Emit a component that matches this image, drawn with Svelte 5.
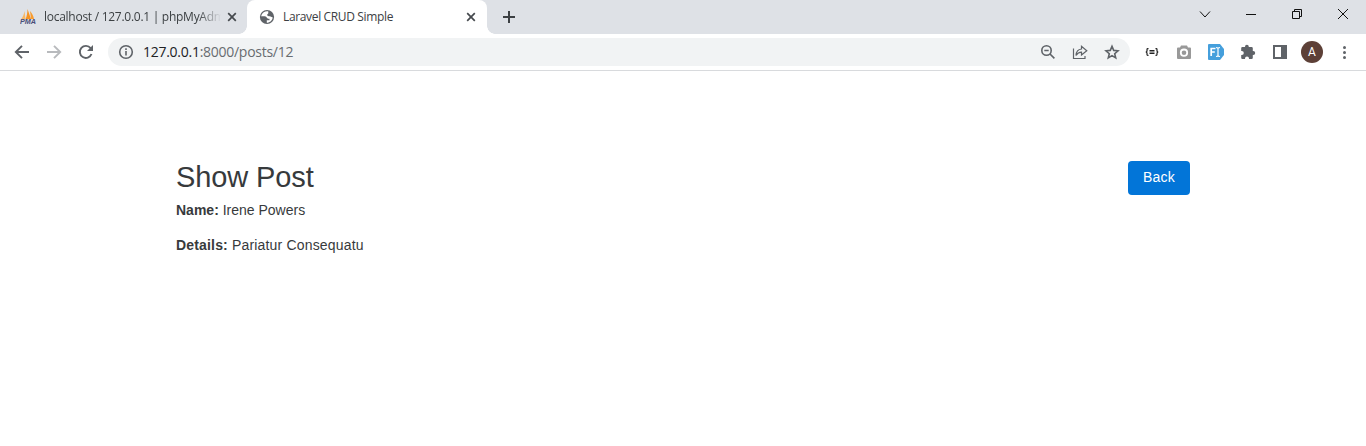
<script>
  const post = { name: 'Irene Powers', details: 'Pariatur Consequatu' };
</script>

<div class="window">
  <header class="tabs">
    <div class="tab">
      <svg class="fav" width="16" height="16" viewBox="0 0 16 16">
        <path d="M1 10.500C3 8 4 5 4.500 2L5.500 10Z" fill="#f8b765" />
        <path d="M5.500 10.500C7 7 7.500 3 7.500 0L11 10Z" fill="#f79321" />
        <path d="M10 2C12 4 13.500 7 14 10H11Z" fill="#f89c30" />
        <text x="0" y="15" textLength="16" lengthAdjust="spacingAndGlyphs">PMA</text>
      </svg>
      <span class="title faded">localhost / 127.0.0.1 | phpMyAdmin</span>
      <svg class="close" width="10" height="10" viewBox="0 0 10 10"><path d="M1.200 1.200l7.600 7.600M8.800 1.200l-7.600 7.600" /></svg>
    </div>
    <div class="tab active">
      <svg class="fav" width="16" height="16" viewBox="0 0 16 16">
        <circle cx="8" cy="8" r="7.100" fill="#5f6368" />
        <path d="M9.300 2.400C6.500 1.900 3.500 3.300 2.500 6L2.200 7.600H6.200C7.700 7.600 7.800 9.500 9.200 9.700H10.500V11.300H7.800V13.700C11 13.700 13.500 11.300 13.700 8.200C12.500 8.500 11.900 7.400 10.800 7.300C9.600 7.200 8.400 7.300 8.200 6.100C8 5 9.200 5.100 9.300 4Z" fill="#fff" />
        <path d="M2.200 7.500H5.500C7 7.700 7 9 6.300 10V13.400C4 12.700 2 10.500 2.200 7.500Z" fill="#5f6368" />
      </svg>
      <span class="title">Laravel CRUD Simple</span>
      <svg class="close" width="10" height="10" viewBox="0 0 10 10"><path d="M1.200 1.200l7.600 7.600M8.800 1.200l-7.600 7.600" /></svg>
    </div>
    <svg class="plus" width="12" height="12" viewBox="0 0 12 12"><path d="M6 0v12M0 6h12" /></svg>
    <div class="controls">
      <svg width="46" height="28" viewBox="0 0 46 28"><path d="M18 11.500l5 5.500 5-5.500" /></svg>
      <svg width="46" height="28" viewBox="0 0 46 28"><path d="M18 14.500h10" /></svg>
      <svg width="46" height="28" viewBox="0 0 46 28"><path d="M18.500 11.500h7v7h-7zM20.500 11.500v-2h7v7h-2" /></svg>
      <svg width="46" height="28" viewBox="0 0 46 28"><path d="M18 9l10 10M28 9L18 19" /></svg>
    </div>
  </header>

  <nav class="toolbar">
    <div class="nav">
      <svg width="16" height="16" viewBox="0 0 16 16"><path d="M15 8H2M8 1.800L1.800 8 8 14.200" /></svg>
      <svg class="off" width="16" height="16" viewBox="0 0 16 16"><path d="M1 8h13M8 1.800L14.200 8 8 14.200" /></svg>
      <svg width="16" height="16" viewBox="0 0 16 16"><path d="M13.500 10A6 6 0 1 1 12.600 4.200L14 6" /><path class="solid" d="M15 1v6H9z" /></svg>
    </div>
    <div class="omnibox">
      <svg width="16" height="16" viewBox="0 0 16 16"><circle cx="8" cy="8" r="6.300" /><path d="M8 7v4.500M8 4.200v1.700" /></svg>
      <span class="url"><b>127.0.0.1</b>:8000/posts/12</span>
      <div class="actions">
        <svg width="16" height="16" viewBox="0 0 16 16"><circle cx="6.500" cy="6.500" r="4.700" /><path d="M10 10l4.400 4.400M4.300 6.500h4.400" /></svg>
        <svg class="thin" width="16" height="16" viewBox="0 0 16 16"><path d="M1.500 4.500v10h11.500V12M4 11.500C4.200 7.500 6.200 5.300 9.500 5V2.200L14.800 6.700 9.500 11V8.200C7.200 8.200 5.400 9.200 4 11.500Z" /></svg>
        <svg class="star" width="16" height="16" viewBox="0 0 16 16"><path d="M8 2.400l1.700 4 4.300.4-3.300 2.900 1 4.200-3.700-2.300-3.700 2.300 1-4.200L2 6.800l4.300-.4Z" /></svg>
      </div>
    </div>
    <div class="extensions">
      <svg width="16" height="16" viewBox="0 0 16 16"><path class="braces" d="M4.500 4.700H3.800Q3 4.700 3 5.500V7Q3 8 1.700 8Q3 8 3 9V10.500Q3 11.300 3.800 11.300H4.500M11.500 4.700h.7q.8 0 .8.800V7q0 1 1.300 1Q13 8 13 9v1.500q0 .8-.8.800h-.7M5.500 6.500h5M5.500 8h5M5.500 9.500h5" /></svg>
      <svg width="16" height="16" viewBox="0 0 16 16"><path d="M5 1.500h6l1 2h2q1 0 1 1V14q0 1-1 1H2q-1 0-1-1V4.500q0-1 1-1h2Z" fill="#999" /><circle cx="8" cy="8.700" r="3.200" fill="#999" stroke="#fff" stroke-width="1.800" /></svg>
      <svg width="16" height="16" viewBox="0 0 16 16"><path d="M1 0h11l4 5v6l-4 5H1q-1 0-1-1V1q0-1 1-1Z" fill="#459fdc" /><path d="M3.200 12V4.500h4.300M3.200 8h3.600" stroke="#fff" stroke-width="1.700" /><path d="M8 3.500q2 0 2 1q0-1 2-1M10 4.500v7M8 12.500q2 0 2-1q0 1 2 1" stroke="#fff" stroke-width="1.200" /></svg>
      <svg width="16" height="16" viewBox="0 0 16 16"><path class="solid" d="M1.200 4.200Q1.200 3 2.400 3H5V2.700a1.900 1.900 0 0 1 3.800 0V3h2.800q1.200 0 1.200 1.200V7h.4a2 2 0 0 1 0 4h-.4v2.800q0 1.200-1.200 1.200H9v-.5a2 2 0 0 0-4 0v.5H2.400q-1.200 0-1.200-1.200V11h.6a2 2 0 0 0 0-4h-.6Z" /></svg>
      <svg width="16" height="16" viewBox="0 0 16 16"><path class="solid" fill-rule="evenodd" d="M1 1h14v14H1zM3 3v10h6V3z" /></svg>
      <span class="avatar">A</span>
      <svg width="16" height="16" viewBox="0 0 16 16"><circle class="solid" cx="8.500" cy="3.500" r="1.500" /><circle class="solid" cx="8.500" cy="8.500" r="1.500" /><circle class="solid" cx="8.500" cy="13.500" r="1.500" /></svg>
    </div>
  </nav>

  <main>
    <div class="heading">
      <h2>Show Post</h2>
      <button>Back</button>
    </div>
    <p><strong>Name:</strong> <span>{post.name}</span></p>
    <p class="details"><strong>Details:</strong> <span>{post.details}</span></p>
  </main>
</div>

<style>
  :global(body) { margin: 0; background: #fff; }
  .window { height: 446px; overflow: hidden; font-family: "Open Sans", "Noto Sans", sans-serif; }
  svg { display: block; flex: none; fill: none; }
  .tabs { height: 34px; display: flex; background: #dee1e6; }
  .tab { width: 240px; height: 34px; box-sizing: border-box; display: flex; align-items: center; padding: 0 11px 0 12px; position: relative; }
  .tab:first-child { margin-left: 7px; padding: 0 10px 0 13px; }
  .active { background: #fff; border-radius: 8px 8px 0 0; }
  .active::before, .active::after { content: ""; position: absolute; bottom: 0; width: 8px; height: 8px; }
  .active::before { left: -8px; background: radial-gradient(circle at 0 0, #dee1e6 7.500px, #fff 8px); }
  .active::after { right: -8px; background: radial-gradient(circle at 100% 0, #dee1e6 7.500px, #fff 8px); }
  .fav text { font: italic 700 7px "Liberation Sans", sans-serif; fill: #494d78; }
  .title { flex: 1; margin-left: 8px; margin-right: 6px; overflow: hidden; white-space: nowrap; font-size: 12px; line-height: 18px; letter-spacing: -.35px; color: #3c4043; }
  .faded { letter-spacing: -.27px; -webkit-mask-image: linear-gradient(90deg, #000 87%, transparent 100%); mask-image: linear-gradient(90deg, #000 87%, transparent 100%); }
  .close { stroke: #45494d; stroke-width: 1.700; }
  .plus { margin: 11px 0 0 16px; stroke: #3c4043; stroke-width: 2; }
  .controls { display: flex; margin-left: auto; stroke: #111; stroke-width: 1; }
  .toolbar { height: 37px; box-sizing: border-box; border-bottom: 1px solid #d8dadd; display: flex; align-items: center; padding: 0 14px; }
  .nav { display: flex; gap: 16px; stroke: #5f6368; stroke-width: 1.900; }
  .nav .off { stroke: #b8babd; }
  .solid { fill: #5f6368; stroke: none; }
  .omnibox { margin-left: 14px; width: 1022px; height: 28px; box-sizing: border-box; display: flex; align-items: center; padding: 0 10px; border-radius: 14px; background: #f1f3f4; stroke: #5f6368; stroke-width: 1.600; }
  .url { margin-left: 9px; font-size: 14px; line-height: 20px; color: #686c70; letter-spacing: -.27px; }
  .url b { font-weight: 400; color: #202124; }
  .actions { margin-left: auto; display: flex; gap: 16px; }
  .thin { stroke-width: 1.200; }
  .extensions { margin-left: 14px; display: flex; gap: 16px; align-items: center; }
  .braces { stroke: #222; stroke-width: 1.200; }
  .avatar { width: 22px; height: 22px; margin: 0 -3px; border-radius: 50%; background: #5d4037; color: #fff; font: 12px/22px Roboto, sans-serif; text-align: center; }
  main { padding: 90px 176px 0; font: 14px/21px "Liberation Sans", Arial, sans-serif; color: #373a3c; }
  .heading { height: 39px; display: flex; justify-content: space-between; align-items: flex-start; }
  h2 { margin: 0; font-size: 29px; line-height: 33px; font-weight: 400; letter-spacing: -.1px; }
  button { width: 62px; height: 34px; padding: 0 0 2px; border: 0; border-radius: 4px; background: #0275d8; color: #fff; font: 14px/32px "Liberation Sans", Arial, sans-serif; letter-spacing: .2px; }
  p { margin: 0; }
  .details { margin-top: 14px; letter-spacing: .17px; }
</style>
